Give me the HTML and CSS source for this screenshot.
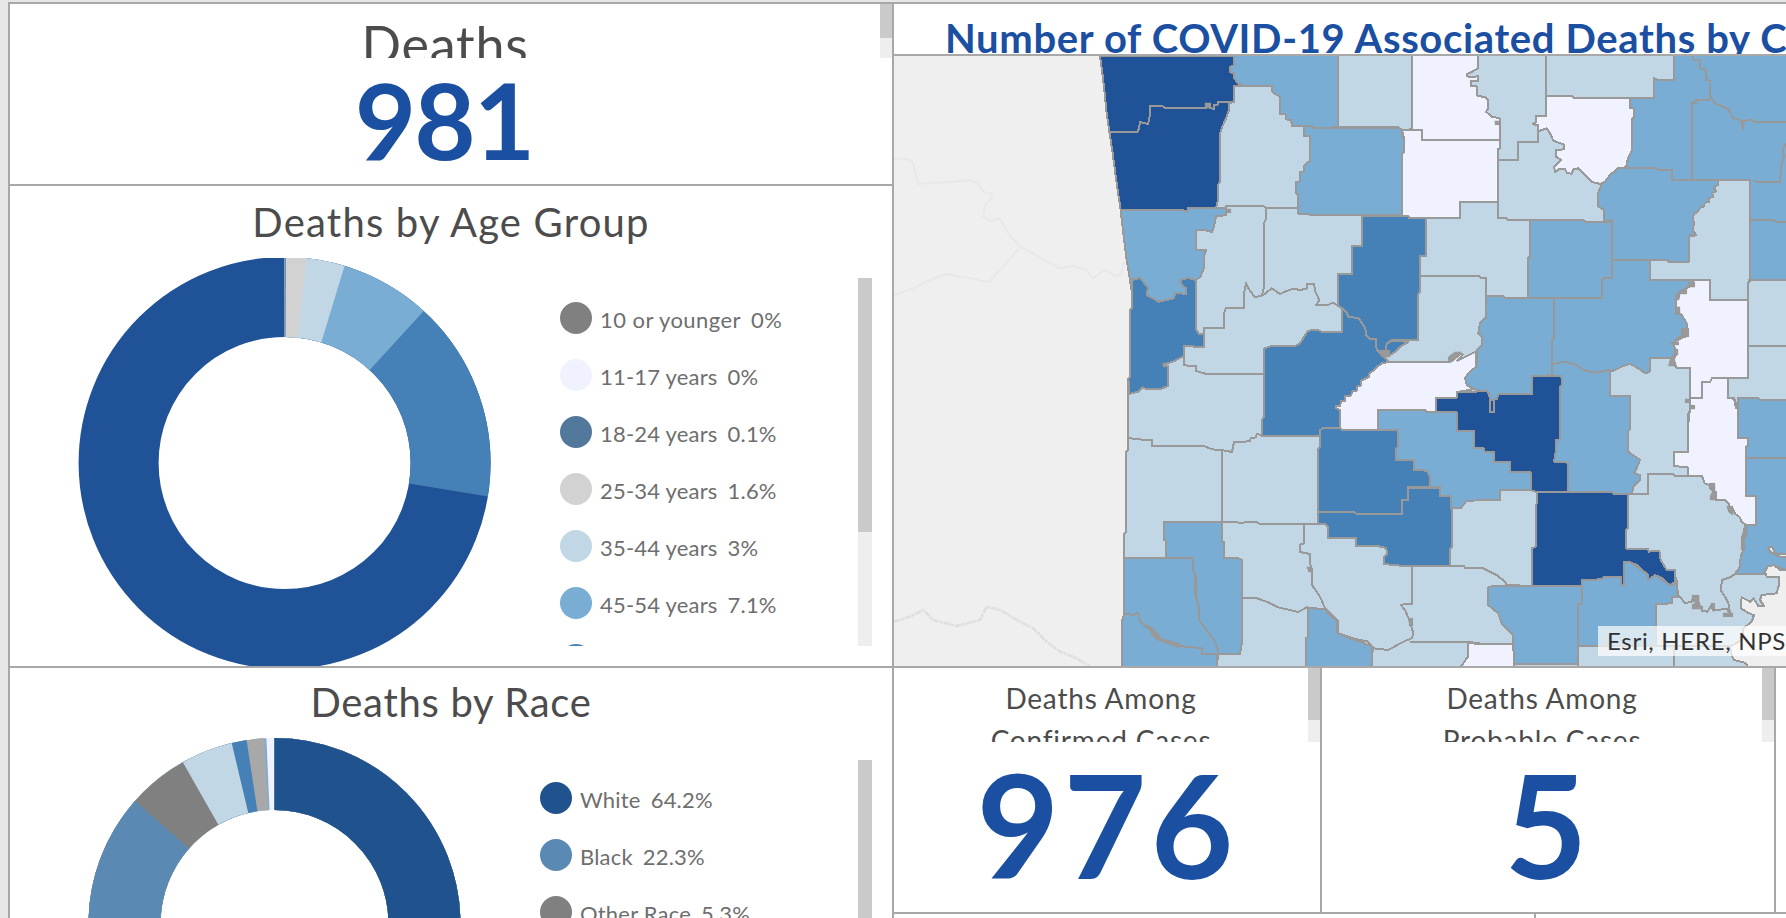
FILE: index.html
```html
<!DOCTYPE html>
<html lang="en">
<head>
<meta charset="utf-8">
<title>COVID-19 Deaths</title>
<link rel="stylesheet" href="styles.css">
</head>
<body>
<main class="dashboard">
  <section class="left">
    <div class="panel total">
      <div class="clip total-head"><h2 class="total-title">Deaths</h2><div class="bar"><i class="thumb t34"></i></div></div>
      <div class="total-num">981</div>
    </div>
    <div class="panel age">
      <h2 class="title">Deaths by Age Group</h2>
      <div class="chart-row">
        <svg class="pie-age" viewBox="10 258 500 408">
          <g class="ring ring-age" transform="rotate(-90 284.6 463)">
            <circle cx="284.6" cy="463" r="166" pathLength="100" stroke="#205297"/>
            <circle cx="284.6" cy="463" r="166" pathLength="100" stroke="#4580b7" stroke-dasharray="27.6 100"/>
            <circle cx="284.6" cy="463" r="166" pathLength="100" stroke="#7aadd3" stroke-dasharray="11.8 100"/>
            <circle cx="284.6" cy="463" r="166" pathLength="100" stroke="#c1d7e5" stroke-dasharray="4.7 100"/>
            <circle cx="284.6" cy="463" r="166" pathLength="100" stroke="#d2d2d2" stroke-dasharray="1.7 100"/>
            <circle cx="284.6" cy="463" r="166" pathLength="100" stroke="#52789b" stroke-dasharray="0.1 100"/>
          </g>
        </svg>
        <ul class="legend legend-age">
          <li><i class="dot c-gray"></i><span>10 or younger</span><b>0%</b></li>
          <li><i class="dot c-white"></i><span>11-17 years</span><b>0%</b></li>
          <li><i class="dot c-slate"></i><span>18-24 years</span><b>0.1%</b></li>
          <li><i class="dot c-silver"></i><span>25-34 years</span><b>1.6%</b></li>
          <li><i class="dot c-light"></i><span>35-44 years</span><b>3%</b></li>
          <li><i class="dot c-sky"></i><span>45-54 years</span><b>7.1%</b></li>
          <li><i class="dot c-mid"></i></li>
        </ul>
        <div class="bar bar-age"><i class="thumb t254"></i></div>
      </div>
    </div>
    <div class="panel race">
      <h2 class="title title-race">Deaths by Race</h2>
      <div class="chart-row">
        <svg class="pie-race" viewBox="10 733 480 185">
          <g class="ring ring-race" transform="rotate(-90 274.5 924)">
            <circle cx="274.5" cy="924" r="150" pathLength="100" stroke="#f0f2ff"/>
            <circle cx="274.5" cy="924" r="150" pathLength="100" stroke="#7aadd3" stroke-dasharray="99.3 100"/>
            <circle cx="274.5" cy="924" r="150" pathLength="100" stroke="#a8a8a8" stroke-dasharray="99.12 100"/>
            <circle cx="274.5" cy="924" r="150" pathLength="100" stroke="#4580b7" stroke-dasharray="97.6 100"/>
            <circle cx="274.5" cy="924" r="150" pathLength="100" stroke="#c1d7e5" stroke-dasharray="96.3 100"/>
            <circle cx="274.5" cy="924" r="150" pathLength="100" stroke="#808080" stroke-dasharray="91.8 100"/>
            <circle cx="274.5" cy="924" r="150" pathLength="100" stroke="#5a89b3" stroke-dasharray="86.5 100"/>
            <circle cx="274.5" cy="924" r="150" pathLength="100" stroke="#20528e" stroke-dasharray="64.2 100"/>
          </g>
        </svg>
        <ul class="legend legend-race">
          <li><i class="dot c-navy"></i><span>White</span><b>64.2%</b></li>
          <li><i class="dot c-steel"></i><span>Black</span><b>22.3%</b></li>
          <li><i class="dot c-gray"></i><span>Other Race</span><b>5.3%</b></li>
        </ul>
        <div class="bar bar-race"><i class="thumb t254"></i></div>
      </div>
    </div>
  </section>
  <section class="right">
    <h1 class="map-title">Number of COVID-19 Associated Deaths by County</h1>
    <div class="map">
      <svg class="counties" viewBox="-558 18 2676 1830" preserveAspectRatio="none">
        <g class="river">
          <path d="M-558 328H-515L-500 340L-492 380L-485 402L-440 398L-380 395L-330 390L-305 402L-290 425L-265 430L-265 445L-285 465L-290 500L-270 513L-240 505L-215 550L-180 590L-120 622L-60 655L-20 648L20 660L38 685L75 660L110 680L125 670L130 640L150 630M-180 590L-230 650L-275 697L-330 685L-400 672L-450 690L-500 715L-558 735"/>
          <path class="red" d="M-558 1715L-510 1700L-470 1680L-440 1710L-370 1728L-300 1710L-280 1670L-240 1680L-180 1715L-140 1735L-100 1775L-60 1805L-20 1820L30 1848"/>
        </g>
        <path class="light state" d="M60 18L66 60L74 130L80 190L88 245L98 310L110 400L122 478L130 550L140 630L150 690L156 730V775L151 780V980L145 985V1200L139 1205V1447L133 1450V1705L127 1710V1860H2140V0H60Z"/>
        <g class="dark">
          <path d="M60 18H462V45L450 52V66L462 70V85L475 100L490 107H462V156H415L413 165H403V177L390 174V162H378V174H256L246 168H210V195L204 222L181 216L174 245H88L80 190L74 130L66 60Z"/>
          <path d="M88 245H174L181 216L204 222L210 195V168H246L256 174H378V162H390V174L403 177V165H413L415 156H462L447 160V180L438 205L426 232L420 250V395L414 405V450L408 473H324L322 485L306 480H122L110 400L98 310Z"/>
        </g>
        <g class="sky">
          <path d="M462 0H775V232L702 234L696 229H637L633 210L618 208L616 192H600V138L590 135L577 125V107H490L475 100L462 85V70L450 66V52L462 45Z"/>
          <path d="M672 229H696L702 234H955L966 240V262L972 264V306L966 312V496H690L684 491H654V432L648 430V396L660 394V366L672 364V348L684 336L690 334V258H672Z"/>
          <path d="M1782 0H2140V690H2010V390H1776V360H1734L1728 354H1638L1644 325L1656 300V206L1662 204V176H1650V144H1722V84L1734 90H1782Z"/>
          <path d="M1565 404L1590 375L1615 354H1728L1734 360H1776V390H1914V405L1902 412L1908 425L1896 428L1900 440L1885 446L1888 456L1874 458L1872 470L1862 472L1850 488L1842 490L1838 512L1843 516L1838 540L1848 555L1828 560L1826 636H1768L1760 630H1597V510L1572 514V480L1553 468V432Z"/>
          <path d="M1350 510H1510L1518 516H1597V684H1572L1566 690V744H1344V624L1350 620Z"/>
          <path d="M122 480H306L322 485L324 474H438V496L408 498L402 530L396 546L372 540H348V600H378L372 620V652L362 680L348 690L325 684L300 690L305 705L318 715V732L285 728L282 745L236 755L200 735L204 712L180 684L150 690L140 630L130 550Z"/>
          <path d="M1218 738H1268L1275 744H1422V865L1416 870V976L1356 978V1032H1256L1250 1048L1232 1050L1225 1025L1190 1020L1160 1005L1155 985L1165 970L1190 945V900L1205 885L1208 865L1195 850L1200 820L1218 800Z"/>
          <path d="M1422 744H1566V690L1572 684H1597V630H1710V690H1840L1838 705L1810 720L1790 740L1787 790L1805 795L1820 820V858L1795 868L1780 880L1790 910L1780 924H1710V965L1695 970L1675 955L1650 942L1630 948L1600 962L1545 968L1510 960L1490 945L1455 935L1416 942V870L1422 865Z"/>
          <path d="M1416 942L1455 935L1490 945L1510 960L1545 968L1590 960V1038H1650V1138L1644 1145V1205L1680 1230L1670 1255L1662 1270L1680 1275V1290L1660 1310L1656 1332H1600L1590 1326H1464V1238L1422 1235L1428 1200V1170L1440 1168V1010L1446 1005L1444 978L1416 976Z"/>
          <path d="M1974 1044H2034L2040 1050H2140V1565L2118 1560L2080 1545L2055 1560L2052 1572H1965L1980 1550L1982 1520L1990 1500L1988 1470L1995 1426H2028V1338H1998V1190L2004 1166L1974 1164Z"/>
          <path d="M894 1080H1034L1040 1086H1130V1142H1182V1192H1210L1215 1204H1242V1234L1290 1236V1266H1352V1320H1260V1350L1160 1352L1142 1375L1112 1374V1340L1080 1338V1312H1050V1280L1040 1262H1002V1230H948V1196L954 1192V1140H894Z"/>
          <path d="M252 1416H426V1474L432 1476V1524H474L486 1530V1776L480 1812H366V1795L300 1788L270 1775L230 1765L210 1740L180 1715L175 1688L160 1695L133 1690V1524H258V1472L252 1470Z"/>
          <path d="M133 1690L160 1695L175 1688L180 1715L210 1740L230 1765L270 1775L300 1788L366 1795V1812H411V1860H127V1710Z"/>
          <path d="M684 1674L735 1678L745 1690L772 1715L775 1750L800 1762L840 1775L878 1790L876 1860H678V1765L684 1760Z"/>
          <path d="M1224 1612L1240 1608H1506V1660L1494 1664V1842H1302L1298 1755L1265 1720L1255 1690L1224 1665Z"/>
          <path d="M1506 1590L1565 1588L1570 1582H1624V1606H1632V1535H1650L1704 1575V1590L1725 1575L1770 1606L1790 1600L1795 1640H1775V1660L1728 1662V1788H1494V1664L1506 1660Z"/>
        </g>
        <g class="white">
          <path d="M996 0H1195V54L1175 66L1160 72V78L1175 82L1195 78V92H1172V108H1190V136L1215 142L1225 150V175L1218 185L1235 200L1260 205V270H1027V240H966L996 238Z"/>
          <path d="M966 240H1027V270H1260V295L1254 298V456H1140V504H984L972 497H966V312L972 306V264Z"/>
          <path d="M1398 138H1476L1482 144H1650V174L1662 176V204L1656 206V300L1644 325L1638 352L1615 354L1590 375L1575 395L1562 402L1535 396L1515 375L1495 355L1480 358L1475 372L1460 368L1455 356L1440 356L1425 366L1422 350L1444 330L1428 320V300L1452 298V284L1420 272L1410 250L1400 235L1375 244V225L1360 222L1368 215V198H1398Z"/>
          <path d="M926 936H1110L1120 920L1130 912H1148L1140 925L1132 932L1188 905V950L1165 970L1155 985L1160 1005L1180 1018L1130 1026V1044H1068V1086H1040L1034 1080H894V1140H784L780 1134V1080L768 1074V1068H780L784 1052H796V1038H812L818 1022H830V1010L844 1006V992L856 986L868 980V970L880 962L890 952L905 940Z"/>
          <path d="M1840 690H1890V750H2004V984H1896L1890 996H1866V1044H1830V954H1790L1775 940L1790 910L1780 880L1795 868L1820 858V820L1805 795L1787 790L1790 740L1810 720L1838 705Z"/>
          <path d="M1830 1044H1866V996H1890L1896 984H1944V1044L1962 1046L1968 1074H1974V1164H2004V1185L1998 1190V1338H2028V1426H2000L1985 1415L1978 1400L1965 1392L1960 1378H1948V1362L1935 1350H1908V1326L1892 1318L1888 1305L1874 1300L1866 1278H1824V1252L1782 1248V1206H1824L1826 1090L1830 1080Z"/>
          <path d="M1164 1780L1300 1782L1302 1860H1135L1164 1820Z"/>
        </g>
        <g class="mid">
          <path d="M846 498H984L990 504H1038V618H1020V725L1014 735V870H935L920 880L918 905L908 915L890 900L888 868H870L858 855L856 835L836 805L806 800L798 785L774 765V672H816V588H846Z"/>
          <path d="M156 690L180 684L204 712L200 735L236 755L282 745L285 728L318 732V715L305 705L300 690L325 684L348 690V838L358 852L372 850V892H345L338 888H312V918L285 932L252 944L264 948V1008L240 1018H200L188 1012L175 1025L148 1032L145 985L151 980V780L156 775Z"/>
          <path d="M786 775L798 785L806 800L836 805L856 835L858 855L870 868H888L890 900L908 915L926 936L905 940L890 952L880 962L868 970V980L856 986L844 992V1006L830 1010V1022H818L812 1038H796V1052H784L780 1068H768V1074L780 1080V1134H730L720 1140V1158H546V1110L552 1100V895L575 888H645L660 880L684 842L715 840L725 846H786Z"/>
          <path d="M720 1140L730 1134H780L786 1140H954V1192L948 1196V1230H1002V1260L1040 1262L1050 1280V1312H984V1350H966V1392H830L822 1386H715V1195L720 1190Z"/>
          <path d="M715 1386H822L830 1392H966V1350H984V1314H1080V1338H1112V1374H1116V1490L1110 1498V1548H972L912 1542V1520L922 1510L918 1494L892 1488H828V1464H744V1430L735 1422H715Z"/>
          <path d="M920 880L940 872L985 876L960 890L945 906L926 918L918 905Z"/>
        </g>
        <g class="dark">
          <path d="M1356 978H1444L1446 1005L1440 1010V1168L1428 1170V1200L1422 1235L1464 1238V1326H1368L1352 1320V1266H1290V1236H1242V1206H1215L1210 1194H1182V1144H1130V1086H1068V1044H1130V1026H1190L1192 1022H1222L1232 1050L1250 1048L1256 1032H1356Z"/>
          <path d="M1370 1326H1597L1602 1332H1645V1435L1638 1440V1496H1704L1706 1505L1738 1502L1742 1530L1760 1560H1785V1595L1770 1606L1748 1585L1725 1575L1704 1590V1575L1670 1545L1650 1537L1632 1535V1606H1624V1582H1570L1565 1588L1506 1590V1608H1356V1495L1368 1490Z"/>
        </g>
        <g class="line">
          <path d="M408 473H438V468H550L558 474H654V491M996 0V238M775 232H955L966 240M558 474V508L552 518V710L546 735M372 850V834H432V790L438 774H492V730L498 700L505 715L525 742L550 735L563 725L575 715L600 732L622 722L640 716L660 720L680 716V702H702L706 725L718 750L708 766H740L760 758L786 775V846M690 496H846M1038 504H984"/>
          <path d="M312 918V946L348 948V963L375 971H552M145 1164L172 1168L216 1170V1188H372L395 1198L425 1200L456 1206L462 1176L510 1174L512 1164L528 1162L530 1152L546 1155M426 1200V1416M426 1416H470L482 1420L500 1416H530L540 1422H735M672 1422V1480L660 1484V1506L690 1512V1540L696 1560V1605L720 1640L735 1675L770 1710L775 1750L830 1768L865 1775L880 1795L925 1800L970 1775L995 1765L1000 1750L990 1715L975 1680L962 1664L996 1662V1548M990 1776H1176L1184 1782H1300M486 1644H528L560 1655L595 1672L655 1686L680 1672L735 1678M411 1812H480"/>
          <path d="M338 1524L340 1560L345 1580L344 1625L348 1640L357 1670V1710L380 1740L405 1775L414 1800L411 1860M258 1524H338M876 1790V1860"/>
          <path d="M1398 0V198H1368V215L1360 222L1375 228V276H1314V330H1254V504H1278L1284 510H1350M1260 270V295M1398 138H1476L1482 144H1722V84L1734 90H1782V0M1254 456H1140V504H1038M1020 678H1198L1204 684H1218V738M926 936H1110M1553 468V432L1565 404"/>
          <path d="M1836 18L1842 30L1860 32V54L1878 60V90L1890 92V138L1888 150H1848V160L1836 156V390M1890 138L1905 160L1925 168L1945 178L1960 204L1985 212L1988 238L1992 212L2015 210L2022 216H2118M2118 280L2108 300L2112 320L2104 345L2100 396H2030L2020 390M2010 510H2080L2088 516H2118M2010 690V695L2004 698V984M2004 690H2118M2004 888H2118M1890 690V750H2004M1710 690H1840M1944 984H2004M1944 1044H1962L1974 1074V1044M1998 1224H2118"/>
          <path d="M1590 960V1038H1650M1656 1332H1704V1272H1780L1785 1278H1824M1824 1252V1278M1824 1206V1090M1830 954V1090M1110 1548H1152L1155 1553L1210 1555L1250 1575L1275 1595L1280 1605L1356 1608M1224 1612V1665M1728 1662V1788M1494 1788H1960M1782 1788V1860M1302 1842H1494V1860M1786 1560V1580L1792 1600V1632L1800 1640L1815 1660L1835 1655L1840 1640L1855 1650L1842 1675L1865 1670V1682L1882 1685L1895 1665L1900 1682L1940 1676L1950 1690L1945 1660L1935 1640L1922 1620L1926 1590L1950 1582L1965 1572H2052M1230 1050V1086H1242V1050"/>
        </g>
        <g class="blob">
          <path d="M1826 695H1844V712H1820V732H1800L1798 750H1786V735L1800 722L1822 708ZM1786 770H1800V788L1810 795H1786ZM1804 835H1826V860H1800V870L1790 876L1782 870L1804 852ZM1774 875H1796V885H1774ZM1782 898H1794V915H1782ZM1770 928L1780 912L1790 948H1765ZM1905 1310V1350H1890V1338ZM1888 1300H1905V1318H1888ZM1940 1368H1958V1396L1946 1386ZM1836 1636H1858V1656L1868 1678H1836V1664L1848 1656H1836ZM1892 1660H1904V1676H1892ZM1930 1688H1958V1700H1930ZM1994 1426H2002V1460H1994V1500H1984V1460ZM1120 912ZM1828 552H1844V560H1828ZM898 900H930V922H905ZM375 158H392V174H375ZM438 476H452V488H438ZM248 938H262V950H248ZM1105 920L1125 905H1145L1138 918L1118 935H1105ZM1816 1046H1830V1058H1816ZM1830 1066H1844V1078H1830ZM1244 212H1260V224H1244Z"/>
          <path d="M200 1722L225 1740L245 1765L300 1780V1795L285 1790L232 1770L215 1755ZM345 1575H350V1638H343ZM680 1550H696V1566H686ZM768 1710H776V1750H768ZM985 1705H998V1728H988Z"/>
        </g>
        <g class="water">
          <path d="M2140 1560L2118 1560L2100 1560L2082 1545L2062 1550L2055 1565L2060 1580L2098 1582L2098 1600L2090 1630L2045 1635L2040 1650L2052 1668H2035L2020 1645L2010 1655L1985 1642L1982 1675L2004 1688L2022 1696L2015 1715L1990 1735L1985 1770L1950 1790L1955 1815L1962 1830L1995 1838L2012 1860H2140Z"/>
          <path d="M2140 1525L2100 1520L2070 1505L2064 1490L2078 1492L2084 1510L2140 1515Z"/>
        </g>
      </svg>
      <div class="credit">Esri, HERE, NPS</div>
    </div>
    <div class="cards">
      <div class="card">
        <div class="clip card-head"><p>Deaths Among<br>Confirmed Cases</p><div class="bar"><i class="thumb t52"></i></div></div>
        <div class="card-num">976</div>
      </div>
      <div class="card">
        <div class="clip card-head"><p>Deaths Among<br>Probable Cases</p><div class="bar"><i class="thumb t52"></i></div></div>
        <div class="card-num">5</div>
      </div>
      <div class="card"></div>
    </div>
    <div class="footer"><div class="foot-cell"></div></div>
  </section>
</main>
</body>
</html>
```
FILE: styles.css
```css
* { box-sizing: border-box; margin: 0; padding: 0; }
body {
  background: #e6e6e6;
  font-family: Lato, "Open Sans", sans-serif;
  color: #4c4c4c;
  width: 1786px;
  height: 918px;
  overflow: hidden;
}
.dashboard {
  display: grid;
  grid-template-columns: 882px 892px;
  column-gap: 2px;
  width: 1778px;
  height: 916px;
  margin: 2px 0 0 8px;
  padding: 2px 0 0 2px;
  background: #a8a8a8;
  overflow: hidden;
}
.left { display: grid; grid-template-rows: 180px 480px 250px; row-gap: 2px; }
.panel { background: #fff; overflow: hidden; }
.clip { display: flex; overflow: hidden; }
.bar { flex: none; width: 12px; background: #eee; }
.thumb { display: block; background: #cacaca; }
.t34 { height: 34px; }
.t52 { height: 52px; }
.t254 { height: 254px; }
.total-head { height: 54px; }
.total-title { flex: 1; font-size: 52px; line-height: 80px; font-weight: 400; text-align: center; letter-spacing: 0.8px; }
.total-num { padding-right: 14px; text-align: center; font-weight: 700; font-size: 106px; line-height: 122px; letter-spacing: -2px; color: #1b4fa2; }
.title { height: 72px; font-size: 40px; line-height: 73px; font-weight: 400; text-align: center; letter-spacing: 1.2px; }
.title-race { height: 65px; line-height: 68px; letter-spacing: 0.7px; }
.chart-row { display: flex; }
.pie-age { flex: none; width: 500px; height: 408px; }
.pie-race { flex: none; width: 480px; height: 185px; }
.ring circle { fill: none; }
.ring-age circle { stroke-width: 80px; }
.ring-race circle { stroke-width: 72px; }
.legend { list-style: none; flex: 1; overflow: hidden; color: #6e6e6e; font-size: 22px; letter-spacing: 0.2px; }
.legend li { display: flex; align-items: center; height: 57px; white-space: nowrap; }
.legend b { font-weight: 400; margin-left: 10px; }
.legend span { margin-left: 8px; }
.legend span, .legend b { padding-top: 3px; }
.legend-age { height: 388px; padding: 31px 0 0 50px; }
.legend-age li:first-child { letter-spacing: 0.45px; }
.legend-race { padding: 36px 0 0 50px; height: 250px; }
.dot { width: 32px; height: 32px; border-radius: 50%; }
.c-gray { background: #808080; }
.c-white { background: #f0f2ff; }
.c-slate { background: #52789b; }
.c-silver { background: #d2d2d2; }
.c-light { background: #c1d7e5; }
.c-sky { background: #7aadd3; }
.c-mid { background: #4580b7; }
.c-navy { background: #20528e; }
.c-steel { background: #5a89b3; }
.bar-age { width: 14px; height: 368px; margin: 20px 20px 0 0; }
.bar-race { width: 14px; height: 368px; margin: 27px 20px 0 0; }
.right { display: grid; grid-template-rows: 50px 610px 244px 4px; row-gap: 2px; overflow: hidden; }
.map-title { background: #fff; color: #1b4fa2; padding-left: 51px; font-size: 40px; line-height: 69px; letter-spacing: 0.65px; white-space: nowrap; overflow: hidden; }
.map { position: relative; background: #efefef; overflow: hidden; }
.counties { display: block; width: 892px; height: 610px; }
.counties path { stroke: #999; stroke-width: 6px; stroke-linejoin: round; shape-rendering: crispEdges; }
.light { fill: #c1d7e5; }
.dark { fill: #205297; }
.mid { fill: #4580b7; }
.sky { fill: #7aadd3; }
.white { fill: #f0f2ff; }
.line { fill: none; }
.water { fill: #efefef; }
.blob { fill: #999; }
.counties .blob path { stroke-width: 1px; }
.river { fill: none; }
.counties .river path { stroke: #e8e8ea; shape-rendering: auto; }
.counties .river .red { stroke: #dfdfe0; stroke-width: 8px; stroke-dasharray: 20 2 9 3; }
.credit { position: absolute; right: 0; bottom: 10px; width: 188px; height: 30px; padding-left: 9px; overflow: hidden; white-space: nowrap; background: rgba(255, 255, 255, 0.7); color: #323232; font-size: 24px; letter-spacing: 0.7px; line-height: 30px; }
.cards { display: grid; grid-template-columns: 426px 452px 10px; column-gap: 2px; }
.card { background: #fff; overflow: hidden; }
.card-head { height: 74px; }
.card-head p { flex: 1; padding-top: 9px; font-size: 28px; line-height: 42px; letter-spacing: 0.8px; text-align: center; }
.card-num { text-align: center; font-weight: 700; font-size: 143px; line-height: 164px; letter-spacing: 4px; color: #1b4fa2; }
.footer { display: grid; grid-template-columns: 640px 250px; column-gap: 2px; }
.footer::before, .foot-cell { content: ""; background: #fff; }
```
